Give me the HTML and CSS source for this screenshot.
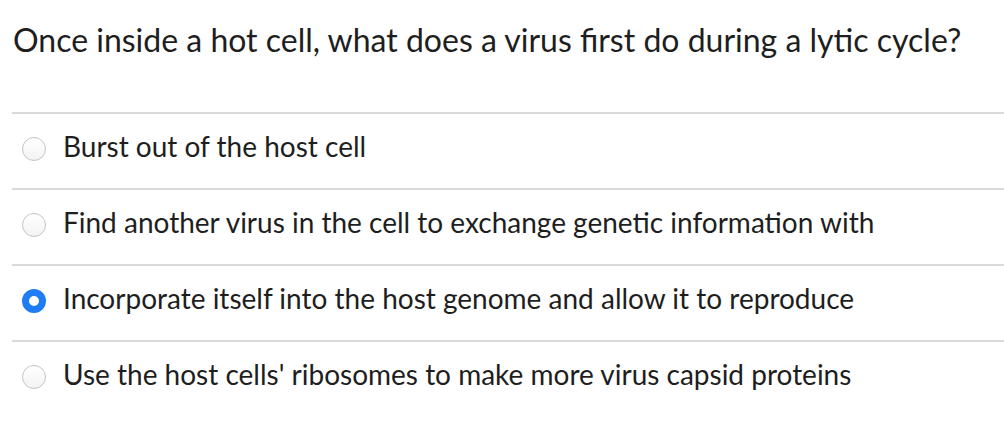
FILE: index.html
```html
<!DOCTYPE html>
<html>
<head>
<meta charset="utf-8">
<link rel="stylesheet" href="styles.css">
</head>
<body>
<div class="quiz">
  <div class="question">Once inside a hot cell, what does a virus first do during a lytic cycle?</div>
  <div class="answers">
    <label class="answer"><span class="radio"></span><span class="text">Burst out of the host cell</span></label>
    <label class="answer"><span class="radio"></span><span class="text">Find another virus in the cell to exchange genetic information with</span></label>
    <label class="answer"><span class="radio checked"></span><span class="text">Incorporate itself into the host genome and allow it to reproduce</span></label>
    <label class="answer"><span class="radio"></span><span class="text">Use the host cells' ribosomes to make more virus capsid proteins</span></label>
  </div>
</div>
</body>
</html>
```
FILE: styles.css
```css
html, body {
  margin: 0;
  padding: 0;
  background: #ffffff;
}
body {
  font-family: Lato, "Liberation Sans", sans-serif;
  color: #1e1e1e;
}
.quiz {
  padding-left: 12px;
}
.question {
  font-size: 32px;
  line-height: 40px;
  padding-top: 20px;
  padding-left: 1px;
  height: 112px;
  box-sizing: border-box;
}
.answer {
  display: flex;
  align-items: flex-start;
  height: 76px;
  box-sizing: border-box;
  border-top: 2px solid #d9d9d9;
}
.radio {
  width: 24px;
  height: 24px;
  box-sizing: border-box;
  border-radius: 50%;
  border: 1px solid #c4c4c4;
  background: linear-gradient(#ffffff, #f3f3f3);
  margin-top: 23px;
  margin-left: 10px;
  margin-right: 17px;
  flex: none;
}
.radio.checked {
  border: 7px solid #1f7cf4;
  background: #ffffff;
}
.text {
  font-size: 28px;
  line-height: 34px;
  margin-top: 15px;
}
```
